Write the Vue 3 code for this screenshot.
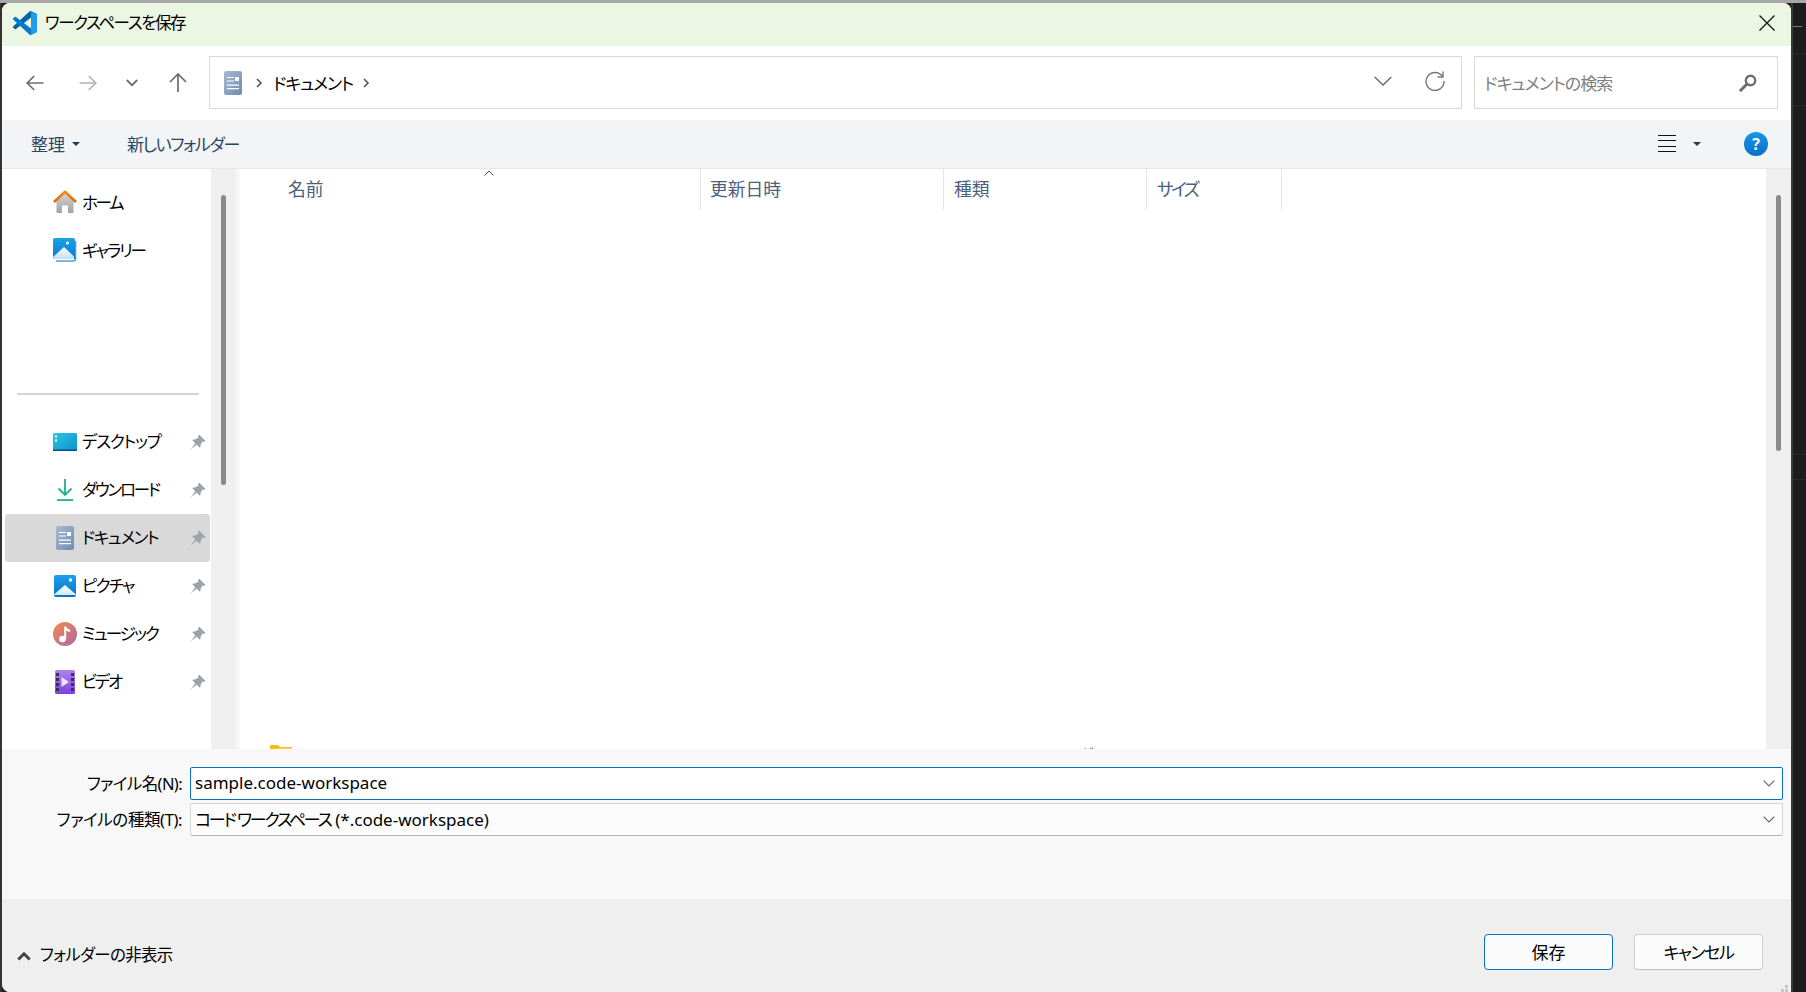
<script setup>
const group1 = [
  { id: 'home', label: 'ホーム', tracking: -2.3 },
  { id: 'gallery', label: 'ギャラリー', tracking: -2 },
]
const group2 = [
  { id: 'desktop', label: 'デスクトップ', tracking: -1.2 },
  { id: 'download', label: 'ダウンロード', tracking: -2.2 },
  { id: 'docs', label: 'ドキュメント', tracking: -1.3, active: true },
  { id: 'pictures', label: 'ピクチャ', tracking: -1.7 },
  { id: 'music', label: 'ミュージック', tracking: -1.9 },
  { id: 'video', label: 'ビデオ', tracking: -2.3 },
]
const cols = [
  { label: '名前', cls: 'c-name' },
  { label: '更新日時', cls: 'c-date' },
  { label: '種類', cls: 'c-type' },
  { label: 'サイズ', cls: 'c-size' },
]
const pinHead = 'M9 .5 15.500 7 14 8 12.500 7.500 10.500 11 10.500 13 9.500 13.500 2.500 6.500 3 5.500 5 5.500 8.500 3.500 8 2Z'
const pinNeedle = 'M6 8.500.6 15.400 7.500 10Z'
</script>

<template>
  <div class="screen">
    <div class="top-strip"></div>
    <div class="stage">
      <div class="left-edge"></div>
      <div class="dialog">
        <header class="titlebar">
          <svg class="vscode" viewBox="0 0 100 100" width="24" height="24">
            <path fill="#0065A9" d="M96.46 10.8 75.86.88a6.23 6.23 0 0 0-7.11 1.21L1.36 63.58a4.17 4.17 0 0 0 0 6.16l5.51 5a4.17 4.17 0 0 0 5.32.24l81.23-61.62c2.73-2.07 6.64-.13 6.64 3.29v-.24a6.25 6.25 0 0 0-3.54-5.62z"/>
            <path fill="#007ACC" d="M96.46 89.2 75.86 99.12a6.23 6.23 0 0 1-7.11-1.21L1.36 36.42a4.17 4.17 0 0 1 0-6.16l5.51-5a4.17 4.17 0 0 1 5.32-.24l81.23 61.62c2.73 2.07 6.64.13 6.64-3.29v.24a6.25 6.25 0 0 1-3.54 5.62z"/>
            <path fill="#1F9CF0" d="M75.86 99.13a6.23 6.23 0 0 1-7.11-1.21c2.31 2.31 6.25.67 6.25-2.6V4.68c0-3.27-3.94-4.9-6.25-2.59a6.23 6.23 0 0 1 7.11-1.21l20.6 9.91A6.25 6.25 0 0 1 100 16.4v67.2a6.25 6.25 0 0 1-3.54 5.63z"/>
          </svg>
          <span class="title-text">ワークスペースを保存</span>
          <svg class="close" viewBox="0 0 16 16" width="16" height="16">
            <path d="M.5.5l15 15M15.5.5l-15 15" stroke="#111" stroke-width="1.3" fill="none"/>
          </svg>
        </header>

        <nav class="navrow">
          <svg class="nav-icon back" viewBox="0 0 18 18" width="18" height="18"><path d="M17.5 9H1.2M8.2 2 1.2 9l7 7" fill="none" stroke="#6c6c6c" stroke-width="1.7"/></svg>
          <svg class="nav-icon fwd" viewBox="0 0 18 18" width="18" height="18"><path d="M.5 9h16.3M9.8 2l7 7-7 7" fill="none" stroke="#b4b4b4" stroke-width="1.7"/></svg>
          <svg class="nav-icon down" viewBox="0 0 12 8" width="12" height="8"><path d="M.8 1 6 6.2 11.2 1" fill="none" stroke="#6c6c6c" stroke-width="1.8"/></svg>
          <svg class="nav-icon up" viewBox="0 0 20 20" width="20" height="20"><path d="M10 20V2M2 10l8-8 8 8" fill="none" stroke="#6c6c6c" stroke-width="1.7"/></svg>
          <div class="address">
            <svg viewBox="0 0 18 24" width="18" height="24">
              <defs><linearGradient id="docA" x1="0" y1="0" x2="1" y2="1"><stop offset="0" stop-color="#a7bbd3"/><stop offset="1" stop-color="#6e8cae"/></linearGradient></defs>
              <rect width="18" height="24" rx="2" fill="url(#docA)"/>
              <path d="M3 6h7v1H3zM3 9.500h7v1H3zM3 13.500h12v1.200H3zM3 17h12v1.200H3z" fill="#fff"/><rect x="11" y="6" width="4" height="4" fill="#fff"/>
            </svg>
            <svg class="crumb first" viewBox="0 0 7 10" width="7" height="10"><path d="M1 1l4 4-4 4" fill="none" stroke="#555" stroke-width="1.6"/></svg>
            <span class="crumb-text">ドキュメント</span>
            <svg class="crumb" viewBox="0 0 7 10" width="7" height="10"><path d="M1 1l4 4-4 4" fill="none" stroke="#555" stroke-width="1.6"/></svg>
            <svg class="addr-down" viewBox="0 0 18 10" width="18" height="10"><path d="M.7 1 9 9l8.300-8" fill="none" stroke="#666" stroke-width="1.300"/></svg>
            <svg class="refresh" viewBox="0 0 20 20" width="20" height="20"><path d="M17.500 5.500A9 9 0 1 0 19 10" fill="none" stroke="#777" stroke-width="1.400"/><path d="M18 .5v5.500h-5.500" fill="none" stroke="#777" stroke-width="1.400"/></svg>
          </div>
          <div class="search">
            <span class="search-text">ドキュメントの検索</span>
            <svg viewBox="0 0 18 18" width="18" height="18"><circle cx="11.500" cy="6.500" r="4.700" fill="none" stroke="#6e6e6e" stroke-width="2.400"/><path d="M8 10 1.800 16.200" stroke="#6e6e6e" stroke-width="3" stroke-linecap="round"/></svg>
          </div>
        </nav>

        <div class="toolbar">
          <span class="tool">整理</span>
          <span class="mini-caret"></span>
          <span class="tool newfolder">新しいフォルダー</span>
          <div class="view-btn"><i></i><i></i><i></i><i></i></div>
          <span class="mini-caret view-caret"></span>
          <div class="help">?</div>
        </div>

        <main class="body">
          <aside class="sidebar">
            <div class="side-list">
              <div class="group first-group">
                <div v-for="it in group1" :key="it.id" class="side-row">
                  <span class="side-icon">
                    <svg v-if="it.id === 'home'" viewBox="0 0 24 24" width="24" height="24">
                      <defs>
                        <linearGradient id="hb" x1="0" y1="0" x2="0" y2="1"><stop offset="0" stop-color="#d4d4d4"/><stop offset="1" stop-color="#a2a2a2"/></linearGradient>
                        <linearGradient id="hr" x1="0" y1="0" x2="0" y2="1"><stop offset="0" stop-color="#f08c1a"/><stop offset="1" stop-color="#e06a00"/></linearGradient>
                      </defs>
                      <path d="M3.500 10.500 12 3l8.500 7.500V22a1 1 0 0 1-1 1H15v-7.500H9V23H4.500a1 1 0 0 1-1-1z" fill="url(#hb)"/>
                      <path d="M1 12 12 1.800 23 12" fill="none" stroke="url(#hr)" stroke-width="2.600" stroke-linejoin="round"/>
                    </svg>
                    <svg v-else viewBox="0 0 24 24" width="24" height="24">
                      <defs>
                        <linearGradient id="gb" x1="0" y1="0" x2="0" y2="1"><stop offset="0" stop-color="#1ba1e8"/><stop offset="1" stop-color="#0a78d0"/></linearGradient>
                        <linearGradient id="gm" x1="0" y1="0" x2="0" y2="1"><stop offset="0" stop-color="#ffffff"/><stop offset="1" stop-color="#bfe0f6"/></linearGradient>
                      </defs>
                      <path d="M22.500 3v18a2 2 0 0 1-2 2H3" fill="none" stroke="#4f9bdb" stroke-width="1.600"/>
                      <path d="M2 0h18a2 2 0 0 1 2 2v19H2a2 2 0 0 1-2-2V2a2 2 0 0 1 2-2z" fill="url(#gb)"/>
                      <path d="M0 19 11 9l10 9.500V21H2a2 2 0 0 1-2-2z" fill="url(#gm)"/>
                      <circle cx="14.500" cy="5" r="1.500" fill="#fff"/>
                    </svg>
                  </span>
                  <span class="side-label" :style="{ letterSpacing: it.tracking + 'px' }">{{ it.label }}</span>
                </div>
              </div>
              <div class="side-sep"></div>
              <div class="group">
                <div v-for="it in group2" :key="it.id" class="side-row" :class="{ active: it.active }">
                  <span class="side-icon">
                    <svg v-if="it.id === 'desktop'" viewBox="0 0 24 18" width="24" height="18">
                      <defs><linearGradient id="dk" x1="0" y1="0" x2="1" y2="1"><stop offset="0" stop-color="#2bc7e0"/><stop offset="1" stop-color="#0f8fd0"/></linearGradient></defs>
                      <rect width="24" height="18" rx="1.500" fill="url(#dk)"/>
                      <rect y="16.500" width="24" height="1.500" fill="#0b4f86"/>
                      <rect x="2" y="2.500" width="2" height="2" fill="#fff"/><rect x="2" y="6.500" width="2" height="2" fill="#fff"/>
                    </svg>
                    <svg v-else-if="it.id === 'download'" viewBox="0 0 16 22" width="16" height="22">
                      <path d="M8 0v16M1.500 9.500 8 16l6.500-6.500" fill="none" stroke="#1bb28f" stroke-width="1.800"/>
                      <rect y="20.200" width="16" height="1.800" fill="#1bb28f"/>
                    </svg>
                    <svg v-else-if="it.id === 'docs'" viewBox="0 0 18 24" width="18" height="24">
                      <defs><linearGradient id="docB" x1="0" y1="0" x2="1" y2="1"><stop offset="0" stop-color="#a7bbd3"/><stop offset="1" stop-color="#6e8cae"/></linearGradient></defs>
                      <rect width="18" height="24" rx="2" fill="url(#docB)"/>
                      <path d="M3 6h7v1H3zM3 9.500h7v1H3zM3 13.500h12v1.200H3zM3 17h12v1.200H3z" fill="#fff"/><rect x="11" y="6" width="4" height="4" fill="#fff"/>
                    </svg>
                    <svg v-else-if="it.id === 'pictures'" viewBox="0 0 22 22" width="22" height="22">
                      <defs>
                        <linearGradient id="pb" x1="0" y1="0" x2="0" y2="1"><stop offset="0" stop-color="#1ba1e8"/><stop offset="1" stop-color="#0a72cc"/></linearGradient>
                        <linearGradient id="pm" x1="0" y1="0" x2="0" y2="1"><stop offset="0" stop-color="#ffffff"/><stop offset="1" stop-color="#d4e9f8"/></linearGradient>
                      </defs>
                      <rect width="22" height="22" rx="2" fill="url(#pb)"/>
                      <path d="M0 19.500 11 10l11 9.500V20H0z" fill="url(#pm)"/>
                      <circle cx="16.500" cy="5" r="1.700" fill="#fff"/>
                    </svg>
                    <svg v-else-if="it.id === 'music'" viewBox="0 0 24 24" width="24" height="24">
                      <defs><linearGradient id="mu" x1="0" y1="0" x2="1" y2="1"><stop offset="0" stop-color="#f08d4c"/><stop offset="1" stop-color="#b066a8"/></linearGradient></defs>
                      <circle cx="12" cy="12" r="12" fill="url(#mu)"/>
                      <circle cx="9.500" cy="17" r="3.300" fill="#fff"/>
                      <path d="M11.200 17V4.500h2c.3 2.200 2.400 2.600 3.900 3.200v2.500c-1.400-.2-2.800-.8-3.900-1.600V17z" fill="#fff"/>
                    </svg>
                    <svg v-else viewBox="0 0 20 24" width="20" height="24">
                      <defs><linearGradient id="vd" x1="0" y1="0" x2="0" y2="1"><stop offset="0" stop-color="#b083ee"/><stop offset="1" stop-color="#7d3fdc"/></linearGradient></defs>
                      <rect width="20" height="24" rx="1.500" fill="url(#vd)"/>
                      <path d="M1 3h3v3H1zM1 8h3v3H1zM1 13h3v3H1zM1 18h3v3H1zM16 3h3v3h-3zM16 8h3v3h-3zM16 13h3v3h-3zM16 18h3v3h-3z" fill="#3d2a63"/>
                      <path d="M6.500 7 14 12l-7.500 5z" fill="#ece6f8"/>
                    </svg>
                  </span>
                  <span class="side-label" :style="{ letterSpacing: it.tracking + 'px' }">{{ it.label }}</span>
                  <svg class="pin" viewBox="0 0 16 16" width="16" height="16"><path :d="pinHead" fill="#9aa4ac"/><path :d="pinNeedle" fill="#9aa4ac"/></svg>
                </div>
              </div>
            </div>
            <div class="scroll">
              <div class="thumb side-thumb"></div>
            </div>
          </aside>
          <div class="split"></div>
          <section class="files">
            <div class="file-head">
              <span v-for="c in cols" :key="c.label" class="col" :class="c.cls">{{ c.label }}</span>
              <svg class="sort" viewBox="0 0 10 6" width="10" height="6"><path d="M.5 5.500 5 1l4.500 4.500" fill="none" stroke="#555" stroke-width="1"/></svg>
            </div>
            <div class="peek">
              <svg viewBox="0 0 22 18" width="22" height="18"><path d="M0 1a1 1 0 0 1 1-1h7l2 2h11a1 1 0 0 1 1 1v14a1 1 0 0 1-1 1H1a1 1 0 0 1-1-1z" fill="#f8b910"/><rect x="8" y="3" width="14" height="14" fill="#fbd56a"/></svg>
              <span class="peek-name">hitd</span>
              <span class="peek-type">ファイル フォルダー</span>
            </div>
          </section>
          <div class="scroll right-scroll">
            <div class="thumb main-thumb"></div>
          </div>
        </main>

        <section class="form">
          <label class="form-label name-label">ファイル名(N):</label>
          <div class="field focused">
            <span class="field-text">sample.code-workspace</span>
            <svg viewBox="0 0 12 7" width="12" height="7"><path d="M.7.7 6 6l5.300-5.300" fill="none" stroke="#666" stroke-width="1.200"/></svg>
          </div>
          <label class="form-label type-label">ファイルの種類(T):</label>
          <div class="field select">
            <span class="field-text"><span class="kana-run">コード ワークスペース</span> (*.code-workspace)</span>
            <svg viewBox="0 0 12 7" width="12" height="7"><path d="M.7.7 6 6l5.300-5.300" fill="none" stroke="#666" stroke-width="1.200"/></svg>
          </div>
        </section>

        <footer class="actions">
          <svg class="hide-chev" viewBox="0 0 14 9" width="14" height="9"><path d="M1.300 7.500 7 1.800l5.700 5.700" fill="none" stroke="#444" stroke-width="3"/></svg>
          <span class="hide-text">フォルダーの非表示</span>
          <button class="btn primary">保存</button>
          <button class="btn cancel">キャンセル</button>
          <svg class="grip" viewBox="0 0 7 7" width="7" height="7"><path d="M4 0h3v3H4zM0 4h3v3H0zM4 4h3v3H4z" fill="#c6c6c6"/></svg>
        </footer>
      </div>
      <div class="behind">
        <div class="behind-dash"></div>
        <div class="behind-line one"></div>
        <div class="behind-line two"></div>
        <div class="behind-line three"></div>
        <div class="behind-line four"></div>
      </div>
    </div>
  </div>
</template>

<style scoped>
.screen {
  width: 1806px;
  height: 992px;
  display: flex;
  flex-direction: column;
  overflow: hidden;
  background: #1c1c1c;
  font-family: "Noto Sans", "Noto Sans CJK JP", sans-serif;
  font-feature-settings: "palt";
  font-size: 17px;
  color: #000;
}
.top-strip { height: 3px; background: #a8a8a8; flex: none; }
.stage { flex: 1; display: flex; min-height: 0; }
.left-edge { width: 2px; background: #333; flex: none; }
.dialog {
  width: 1789px;
  flex: none;
  display: flex;
  flex-direction: column;
  background: #fff;
  border-radius: 8px 8px 0 8px;
  overflow: hidden;
  position: relative;
}
.behind {
  flex: 1;
  padding-top: 23px;
  border-left: 2px solid #3a3a3a;
}
.behind-dash { width: 9px; height: 1px; background: #7a7a7a; }
.behind-line { height: 1px; background: #2a2a2a; }
.behind-line.one { margin-top: 26px; }
.behind-line.two { margin-top: 51px; }
.behind-line.three { margin-top: 348px; }
.behind-line.four { margin-top: 24px; }

.titlebar {
  height: 43px;
  flex: none;
  box-sizing: border-box;
  background: #ebf7e2;
  display: flex;
  align-items: center;
  padding: 0 0 3px 11px;
}
.vscode { flex: none; }
.title-text { margin: -2px 0 0 8px; font-size: 16.500px; letter-spacing: -1.400px; }
.close { margin-left: auto; margin-right: 16px; }

.navrow {
  height: 74px;
  flex: none;
  box-sizing: border-box;
  display: flex;
  align-items: center;
  padding-bottom: 1px;
}
.nav-icon { flex: none; }
.back { margin-left: 24px; }
.fwd { margin-left: 35px; }
.down { margin-left: 29px; }
.up { margin-left: 30px; margin-top: -2px; }
.address {
  margin-left: 21px;
  width: 1253px;
  height: 53px;
  box-sizing: border-box;
  border: 1.500px solid #d9d9d9;
  display: flex;
  align-items: center;
  padding-left: 14px;
}
.crumb { flex: none; margin-left: 10px; }
.crumb.first { margin-left: 14px; margin-right: 10px; }
.crumb-text { font-size: 17px; letter-spacing: -1.150px; margin: -1px 0 0 0; }
.addr-down { margin-left: auto; margin-top: -3px; }
.refresh { margin-left: 33px; margin-right: 16px; margin-top: -4px; }
.search {
  margin-left: 12px;
  width: 304px;
  height: 53px;
  box-sizing: border-box;
  border: 1.500px solid #d9d9d9;
  display: flex;
  align-items: center;
  justify-content: space-between;
  padding: 0 20px 0 9px;
  color: #808080;
}
.search-text { letter-spacing: -1px; margin-top: -1px; }

.toolbar {
  height: 48px;
  flex: none;
  border-bottom: 1px solid #e5e7ea;
  background: #f3f4f6;
  display: flex;
  align-items: center;
  padding-left: 29px;
  color: #2b4665;
}
.tool { font-size: 17px; margin-top: -2px; }
.mini-caret {
  width: 0;
  height: 0;
  border-left: 4px solid transparent;
  border-right: 4px solid transparent;
  border-top: 4px solid #1f3a5a;
  margin-left: 7px;
}
.newfolder { margin-left: 47px; letter-spacing: -1.400px; }
.view-btn {
  margin-left: auto;
  width: 18px;
  height: 17px;
  display: flex;
  flex-direction: column;
  justify-content: space-between;
  margin-top: -1px;
}
.view-btn i { display: block; height: 1px; background: #111; }
.view-caret { margin-left: 17px; margin-top: -1px; }
.help {
  margin-left: 43px;
  margin-right: 23px;
  margin-top: -1px;
  width: 24px;
  height: 24px;
  border-radius: 50%;
  background: linear-gradient(#1a96e6, #0670c8);
  color: #fff;
  font-weight: 700;
  font-size: 16px;
  line-height: 24px;
  text-align: center;
}

.body { height: 580px; flex: none; display: flex; min-height: 0; }
.sidebar { width: 234px; flex: none; display: flex; }
.side-list { width: 209px; flex: none; padding: 0 1px 0 3px; box-sizing: border-box; }
.first-group { padding-top: 9px; }
.side-sep { height: 1.500px; background: #d4d4d4; margin: 119px 11px 23px 12px; }
.side-row {
  height: 48px;
  display: flex;
  align-items: center;
  border-radius: 3px;
  padding-left: 48px;
}
.side-row.active { background: #d9d9d9; }
.side-icon {
  width: 24px;
  flex: none;
  display: flex;
  justify-content: center;
  align-items: center;
}
.side-label { margin: -1px 0 0 5px; font-size: 16.500px; }
.pin { margin-left: auto; margin-right: 4px; }

.scroll {
  width: 25px;
  flex: none;
  background: #efefef;
}
.thumb {
  width: 5px;
  margin-left: 10px;
  background: #8a8a8a;
  border-radius: 3px;
}
.side-thumb { margin-top: 26px; height: 290px; }
.main-thumb { margin-top: 26px; height: 256px; }
.split { width: 4px; background: #f7f7f7; flex: none; }
.files { flex: 1; min-width: 0; overflow: hidden; }
.file-head {
  height: 41px;
  position: relative;
  color: #4a5f7c;
  font-size: 17.800px;
}
.col {
  position: absolute;
  top: 0;
  height: 41px;
  line-height: 40px;
  border-right: 1px solid #e5e5e5;
  box-sizing: border-box;
}
.c-name { left: 0; width: 461px; padding-left: 48px; }
.c-date { left: 461px; width: 243px; padding-left: 9px; }
.c-type { left: 704px; width: 203px; padding-left: 10px; }
.c-size { left: 907px; width: 135px; padding-left: 10px; letter-spacing: -2.700px; }
.sort { position: absolute; left: 244px; top: 1px; }
.peek {
  margin-top: 535px;
  height: 24px;
  display: flex;
  align-items: flex-start;
  padding-left: 30px;
  font-size: 16.500px;
  color: #555;
  line-height: 24px;
}
.peek svg { flex: none; }
.peek-name { margin-left: 34px; color: #111; margin-top: -1px; }
.peek-type { margin-left: 630px; margin-top: -1px; letter-spacing: -1.500px; }

.form {
  height: 150px;
  flex: none;
  box-sizing: border-box;
  background: #f8f8f8;
  padding: 18px 8px 0 0;
  display: grid;
  grid-template-columns: 188px 1fr;
  grid-auto-rows: 33px;
  row-gap: 3px;
}
.form-label {
  display: flex;
  align-items: center;
  justify-content: flex-end;
  padding: 0 8px 2px 0;
  font-size: 16.500px;
}
.name-label { letter-spacing: -.6px; }
.type-label { letter-spacing: -.4px; }
.field {
  box-sizing: border-box;
  display: flex;
  align-items: center;
  justify-content: space-between;
  padding: 0 7px 0 4px;
  border-radius: 2px;
  font-size: 17px;
}
.field-text { margin-top: -2px; }
.kana-run { letter-spacing: -2.200px; }
.field.focused {
  background: #fff;
  border: 1.500px solid #0b6fc4;
}
.field.select {
  background: #fcfcfc;
  border: 1px solid #d4d4d4;
  border-bottom: 1.500px solid #b8b8b8;
}

.actions {
  height: 93px;
  flex: none;
  background: #efefef;
  display: flex;
  align-items: flex-start;
  padding: 35px 28px 0 15px;
  box-sizing: border-box;
}
.hide-chev { flex: none; margin-top: 18px; }
.hide-text { margin-left: 9px; margin-top: 8px; font-size: 16.500px; letter-spacing: -.7px; }
.btn {
  width: 129px;
  height: 36px;
  box-sizing: border-box;
  border: 1.500px solid #cfcfcf;
  border-bottom-color: #bdbdbd;
  border-radius: 4px;
  background: #fbfbfb;
  font: inherit;
  font-feature-settings: "palt";
  color: #000;
  padding: 0 0 2px;
  margin-left: 21px;
}
.btn.primary { margin-left: auto; border-color: #0b6fc4; }
.btn.cancel { letter-spacing: -1.400px; }
.grip { position: absolute; right: 3px; bottom: 0; }
</style>

<style>
html, body { margin: 0; background: #1c1c1c; }
</style>
